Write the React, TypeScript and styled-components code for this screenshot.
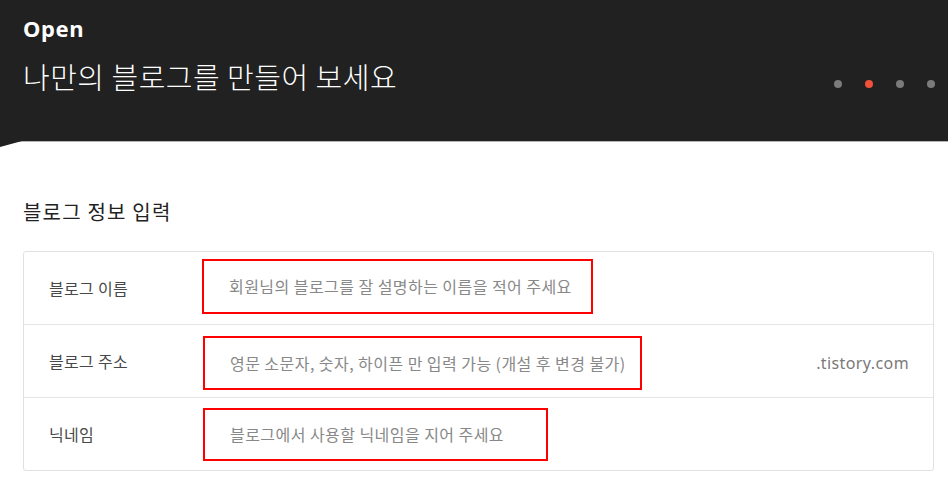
import React from "react";
import styled, { createGlobalStyle } from "styled-components";

const GlobalStyle = createGlobalStyle`
  html, body { margin: 0; padding: 0; background: #ffffff; }
  body {
    font-family: "Noto Sans CJK KR", "Noto Sans", sans-serif;
    -webkit-font-smoothing: antialiased;
  }
  * { box-sizing: border-box; }
`;

const Header = styled.header`
  position: relative;
  height: 142px;
  background: #212121;
  border-bottom: 1px solid #b4b4b4;
  padding: 0 13px 0 23px;
  display: flex;
  align-items: flex-start;
  justify-content: space-between;

  &::after {
    content: "";
    position: absolute;
    left: 0;
    bottom: -6px;
    width: 22px;
    height: 6px;
    background: #212121;
    clip-path: polygon(0 0, 100% 0, 0 100%);
  }
`;

const HeadText = styled.div`
  display: flex;
  flex-direction: column;
`;

const Brand = styled.div`
  margin-top: 15px;
  font-family: "Noto Sans", sans-serif;
  font-weight: 700;
  font-size: 22px;
  line-height: 26px;
  color: #ffffff;
  letter-spacing: 0.6px;
`;

const Title = styled.h1`
  margin: 15px 0 0;
  font-family: "Noto Sans CJK KR", sans-serif;
  font-weight: 300;
  font-size: 29px;
  line-height: 40px;
  color: #ffffff;
  letter-spacing: 0.5px;
`;

const Dots = styled.div`
  display: flex;
  gap: 23px;
  margin-top: 80px;
`;

const Dot = styled.span<{ $active?: boolean }>`
  width: 8px;
  height: 8px;
  border-radius: 50%;
  background: ${(p) => (p.$active ? "#ef5238" : "#7b7b7b")};
`;

const Section = styled.section`
  padding: 0 14px 0 23px;
`;

const SectionTitle = styled.h2`
  margin: 56px 0 25px;
  font-family: "Noto Sans CJK KR", sans-serif;
  font-weight: 400;
  font-size: 20px;
  line-height: 28px;
  color: #222222;
  letter-spacing: 1.2px;
`;

const Table = styled.div`
  border: 1px solid #e1e1e1;
  border-radius: 3px;
  box-shadow: 0 1px 1px rgba(0, 0, 0, 0.05);
`;

const Row = styled.div`
  height: 73px;
  display: flex;
  align-items: center;
  border-bottom: 1px solid #e6e6e6;
  &:last-child {
    border-bottom: none;
    height: 72px;
  }
`;

const Label = styled.div`
  width: 178px;
  flex: none;
  padding-left: 25px;
  font-size: 16px;
  letter-spacing: 0.3px;
  color: #484848;
`;

const Field = styled.div`
  flex: 1;
  display: flex;
  align-items: center;
  justify-content: space-between;
  padding-right: 24px;
`;

const Marked = styled.div<{ $w: number; $h: number; $shift: number; $left: number }>`
  width: ${(p) => p.$w}px;
  height: ${(p) => p.$h}px;
  margin-top: ${(p) => p.$shift}px;
  margin-left: ${(p) => p.$left}px;
  border: 2px solid #ff0000;
  padding-left: 25px;
  display: flex;
  align-items: center;
  font-size: 16px;
  letter-spacing: 0.45px;
  color: #888888;
  white-space: nowrap;
`;

const Suffix = styled.span`
  font-family: "Noto Sans", sans-serif;
  font-size: 16px;
  letter-spacing: 0.4px;
  color: #7a7a7a;
  margin-top: 3px;
`;

const rows = [
  { label: "블로그 이름", text: "회원님의 블로그를 잘 설명하는 이름을 적어 주세요", w: 391, h: 55, shift: -4, left: 0 },
  { label: "블로그 주소", text: "영문 소문자, 숫자, 하이픈 만 입력 가능 (개설 후 변경 불가)", w: 439, h: 54, shift: 4, left: 1, suffix: ".tistory.com" },
  { label: "닉네임", text: "블로그에서 사용할 닉네임을 지어 주세요", w: 345, h: 53, shift: 0, left: 1 },
];

export default function App() {
  return (
    <>
      <GlobalStyle />
      <Header>
        <HeadText>
          <Brand>Open</Brand>
          <Title>나만의 블로그를 만들어 보세요</Title>
        </HeadText>
        <Dots>
          <Dot />
          <Dot $active />
          <Dot />
          <Dot />
        </Dots>
      </Header>
      <Section>
        <SectionTitle>블로그 정보 입력</SectionTitle>
        <Table>
          {rows.map((r) => (
            <Row key={r.label}>
              <Label>{r.label}</Label>
              <Field>
                <Marked $w={r.w} $h={r.h} $shift={r.shift} $left={r.left}>
                  {r.text}
                </Marked>
                {r.suffix && <Suffix>{r.suffix}</Suffix>}
              </Field>
            </Row>
          ))}
        </Table>
      </Section>
    </>
  );
}
